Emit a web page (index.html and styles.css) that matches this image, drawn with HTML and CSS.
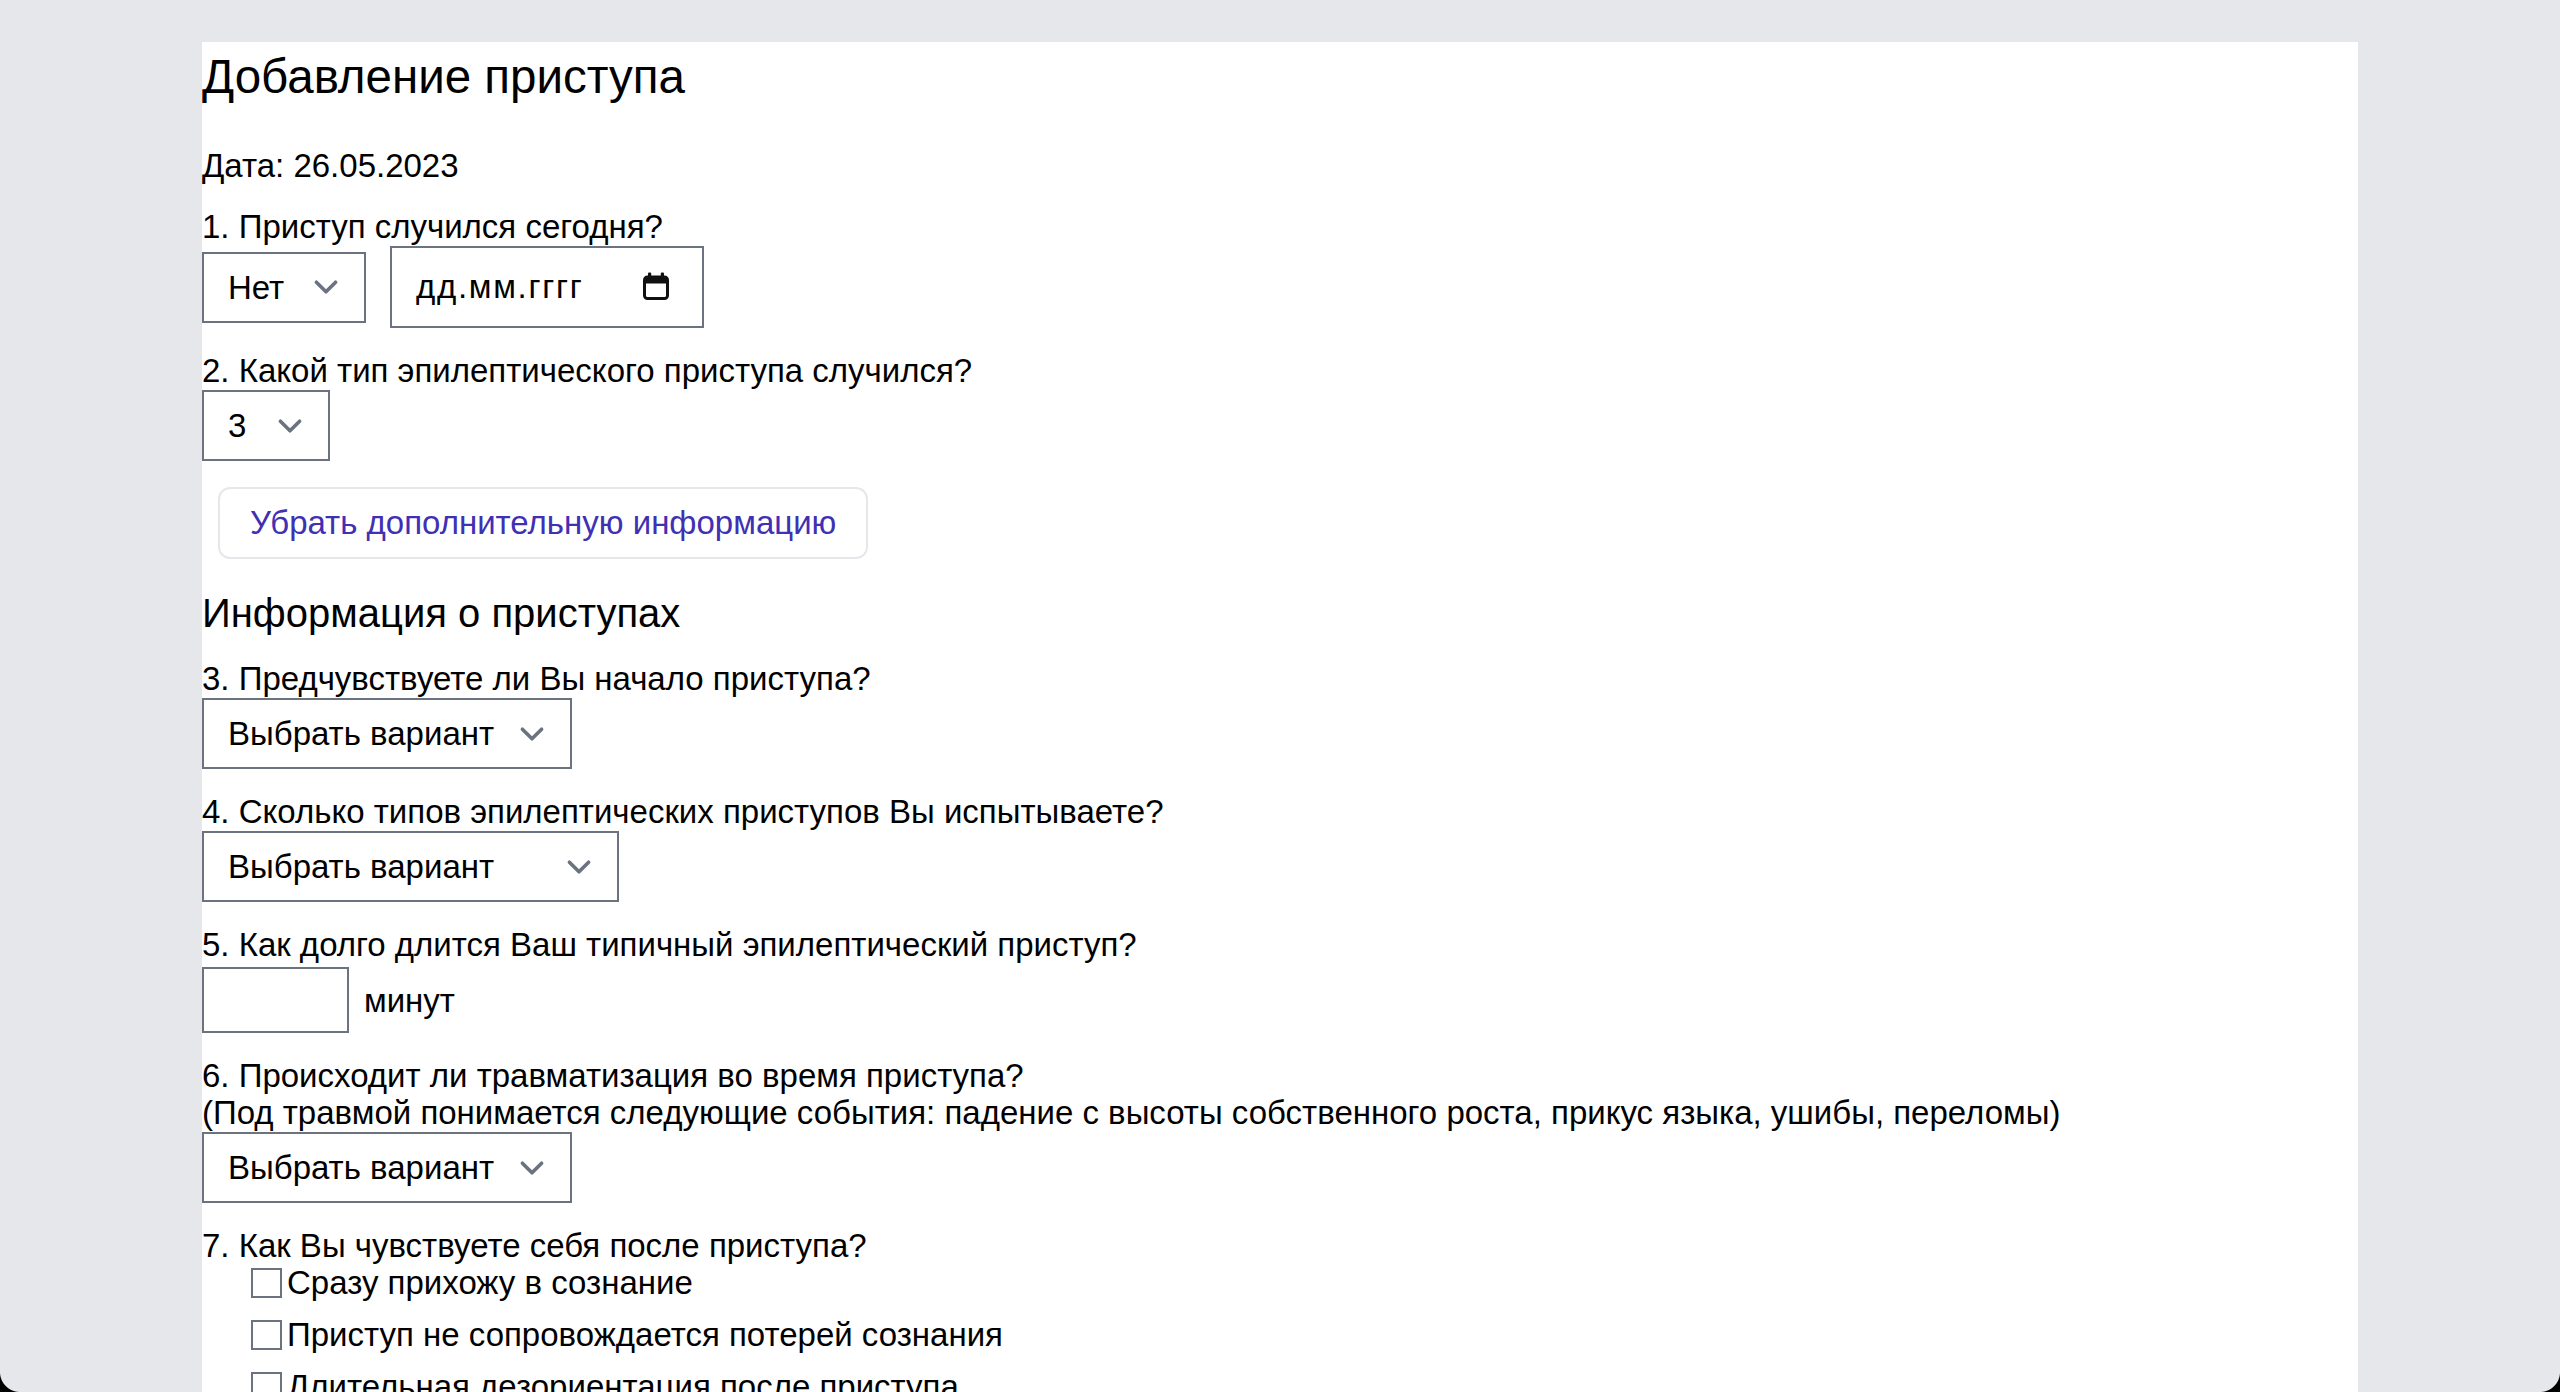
FILE: index.html
```html
<!DOCTYPE html>
<html lang="ru">
<head>
<meta charset="utf-8">
<title>Добавление приступа</title>
<link rel="stylesheet" href="styles.css">
</head>
<body>
<main class="card">
  <h1 class="title">Добавление приступа</h1>
  <p class="date">Дата: 26.05.2023</p>

  <div class="field">
    <label class="q">1. Приступ случился сегодня?</label>
    <div class="row row-gap">
      <span class="select-wrap">
        <select class="select w-yesno"><option>Нет</option><option>Да</option></select>
        <svg class="chev" viewBox="0 0 20 20"><path d="M6 8l4 4 4-4"/></svg>
      </span>
      <div class="date-input">
        <span class="date-text">дд.мм.гггг</span>
        <svg class="cal" viewBox="0 0 26 28" width="26" height="28">
          <rect x="1.5" y="5" width="23" height="21.5" rx="3" fill="none" stroke="#111" stroke-width="3"/>
          <path d="M1.5 8 a3 3 0 0 1 3 -3 h17 a3 3 0 0 1 3 3 v3.5 h-23 z" fill="#111"/>
          <rect x="5" y="0.5" width="3.2" height="6" rx="1" fill="#111"/>
          <rect x="17.8" y="0.5" width="3.2" height="6" rx="1" fill="#111"/>
        </svg>
      </div>
    </div>
  </div>

  <div class="field">
    <label class="q">2. Какой тип эпилептического приступа случился?</label>
    <div class="row">
      <span class="select-wrap">
        <select class="select w-type"><option>3</option><option>1</option><option>2</option></select>
        <svg class="chev" viewBox="0 0 20 20"><path d="M6 8l4 4 4-4"/></svg>
      </span>
    </div>
  </div>

  <button class="toggle" type="button">Убрать дополнительную информацию</button>

  <h2 class="subtitle">Информация о приступах</h2>

  <div class="field">
    <label class="q">3. Предчувствуете ли Вы начало приступа?</label>
    <div class="row">
      <span class="select-wrap">
        <select class="select w-choice"><option>Выбрать вариант</option></select>
        <svg class="chev" viewBox="0 0 20 20"><path d="M6 8l4 4 4-4"/></svg>
      </span>
    </div>
  </div>

  <div class="field">
    <label class="q">4. Сколько типов эпилептических приступов Вы испытываете?</label>
    <div class="row">
      <span class="select-wrap">
        <select class="select w-wide"><option>Выбрать вариант</option></select>
        <svg class="chev" viewBox="0 0 20 20"><path d="M6 8l4 4 4-4"/></svg>
      </span>
    </div>
  </div>

  <div class="field">
    <label class="q">5. Как долго длится Ваш типичный эпилептический приступ?</label>
    <div class="row row-minutes">
      <input class="minutes" type="text" aria-label="минут">
      <span class="unit">минут</span>
    </div>
  </div>

  <div class="field">
    <label class="q">6. Происходит ли травматизация во время приступа?<br>(Под травмой понимается следующие события: падение с высоты собственного роста, прикус языка, ушибы, переломы)</label>
    <div class="row">
      <span class="select-wrap">
        <select class="select w-choice"><option>Выбрать вариант</option></select>
        <svg class="chev" viewBox="0 0 20 20"><path d="M6 8l4 4 4-4"/></svg>
      </span>
    </div>
  </div>

  <div class="field">
    <label class="q">7. Как Вы чувствуете себя после приступа?</label>
    <div class="checks">
      <label class="check"><input type="checkbox" class="box">Сразу прихожу в сознание</label>
      <label class="check"><input type="checkbox" class="box">Приступ не сопровождается потерей сознания</label>
      <label class="check"><input type="checkbox" class="box">Длительная дезориентация после приступа</label>
      <label class="check"><input type="checkbox" class="box">Сонливость после приступа</label>
    </div>
  </div>
</main>
</body>
</html>
```

FILE: styles.css
```css
html, body {
  margin: 0;
  padding: 0;
}

body {
  background: #e5e7eb;
  font-family: "Liberation Sans", Arial, Helvetica, sans-serif;
  font-size: 33px;
  color: #000;
}

/* window corners of the screenshot frame */
body::before,
body::after {
  content: "";
  position: fixed;
  bottom: 0;
  width: 20px;
  height: 20px;
  z-index: 10;
  pointer-events: none;
}

body::before {
  left: 0;
  background: radial-gradient(circle at 100% 0, transparent 19.5px, #000 20.5px);
}

body::after {
  right: 0;
  background: radial-gradient(circle at 0 0, transparent 19.5px, #000 20.5px);
}

.card {
  width: 2156px;
  margin: 42px auto 0;
  padding: 7px 0 300px;
  background: #fff;
}

.title {
  font-size: 47.5px;
  line-height: 56px;
  font-weight: 400;
  margin: 0;
}

.date {
  margin: 42px 0 0;
  line-height: 37px;
}

.field {
  margin-top: 24px;
}

.q {
  display: block;
  line-height: 37px;
}

.row {
  display: flex;
  align-items: center;
  margin-top: 1px;
}

.row-gap {
  gap: 24px;
}

.select-wrap {
  position: relative;
  display: inline-flex;
}

.select {
  appearance: none;
  -webkit-appearance: none;
  font-family: inherit;
  font-size: 33px;
  color: #000;
  background: #fff;
  border: 2px solid #6b7280;
  border-radius: 0;
  height: 71px;
  padding: 0 66px 0 24px;
  margin: 0;
  box-sizing: border-box;
}

.w-yesno { width: 164px; }
.w-type { width: 128px; }
.w-choice { width: 370px; }
.w-wide { width: 417px; }

.chev {
  position: absolute;
  right: 16px;
  top: 50%;
  width: 48px;
  height: 48px;
  margin-top: -24px;
  pointer-events: none;
}

.chev path {
  fill: none;
  stroke: #6b7280;
  stroke-width: 1.5;
  stroke-linecap: round;
  stroke-linejoin: round;
}

.date-input {
  display: flex;
  align-items: center;
  justify-content: space-between;
  box-sizing: border-box;
  width: 314px;
  height: 82px;
  border: 2px solid #6b7280;
  padding: 0 33px 0 24px;
  background: #fff;
}

.date-text {
  letter-spacing: 1.7px;
}

.cal {
  display: block;
  width: 26px;
  height: 28px;
  margin-top: -2px;
}

.toggle {
  display: block;
  font-family: inherit;
  font-size: 33px;
  color: #4030b4;
  background: #fff;
  border: 2px solid #e5e7eb;
  border-radius: 12px;
  height: 72px;
  padding: 0 30px;
  margin: 26px 0 0 16px;
  cursor: pointer;
}

.subtitle {
  font-size: 40px;
  line-height: 46px;
  font-weight: 400;
  margin: 31px 0 12px;
}

.row-minutes {
  margin-top: 4px;
}

.minutes {
  box-sizing: border-box;
  width: 147px;
  height: 66px;
  border: 2px solid #6b7280;
  border-radius: 0;
  margin: 0;
  padding: 0 12px;
  font-family: inherit;
  font-size: 33px;
  background: #fff;
}

.unit {
  margin-left: 15px;
  line-height: 37px;
}

.checks {
  display: flex;
  flex-direction: column;
  gap: 15px;
  margin-top: 0;
  padding-left: 49px;
}

.check {
  display: flex;
  align-items: center;
  height: 37px;
  line-height: 37px;
}

.box {
  appearance: none;
  -webkit-appearance: none;
  box-sizing: border-box;
  width: 31px;
  height: 30px;
  margin: 0 5px 0 0;
  border: 2px solid #6b7280;
  border-radius: 0;
  background: #fff;
  flex: none;
}
```
